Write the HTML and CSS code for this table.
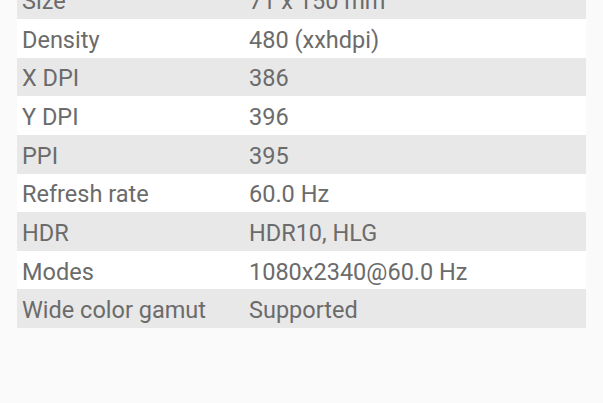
FILE: index.html
```html
<!DOCTYPE html>
<html>
<head>
<meta charset="utf-8">
<link rel="stylesheet" href="styles.css">
</head>
<body>
<div class="table">
  <div class="row"><span class="label">Size</span><span class="value">71 x 150 mm</span></div>
  <div class="row"><span class="label">Density</span><span class="value">480 (xxhdpi)</span></div>
  <div class="row"><span class="label">X DPI</span><span class="value">386</span></div>
  <div class="row"><span class="label">Y DPI</span><span class="value">396</span></div>
  <div class="row"><span class="label">PPI</span><span class="value">395</span></div>
  <div class="row"><span class="label">Refresh rate</span><span class="value">60.0 Hz</span></div>
  <div class="row"><span class="label">HDR</span><span class="value">HDR10, HLG</span></div>
  <div class="row"><span class="label">Modes</span><span class="value">1080x2340@60.0 Hz</span></div>
  <div class="row"><span class="label">Wide color gamut</span><span class="value">Supported</span></div>
</div>
</body>
</html>
```
FILE: styles.css
```css
html, body {
  margin: 0;
  padding: 0;
  background: #fafafa;
  height: 100%;
  overflow: hidden;
}
body {
  font-family: Roboto, "Liberation Sans", sans-serif;
  color: #6b6b6b;
}
.table {
  margin: -19.6px 17px 0 17px;
  display: flex;
  flex-direction: column;
}
.row {
  height: 38.625px;
  box-sizing: border-box;
  padding-top: 3px;
  display: flex;
  align-items: center;
  font-size: 23.5px;
  background: #ffffff;
}
.row:nth-child(odd) {
  background: #e8e8e8;
}
.label {
  width: 232px;
  padding-left: 5px;
  box-sizing: border-box;
}
.value {
  flex: 1;
}
```
